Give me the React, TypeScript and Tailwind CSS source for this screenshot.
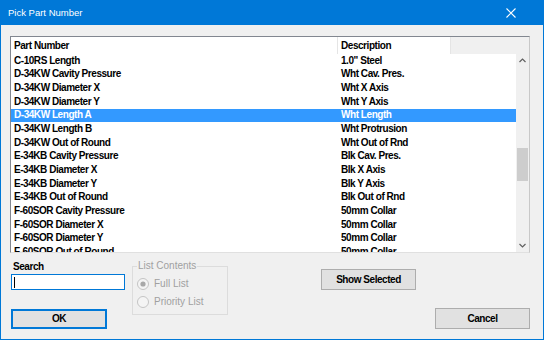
import React from "react";

const rows: [string, string][] = [
  ["C-10RS Length", '1.0" Steel'],
  ["D-34KW Cavity Pressure", "Wht Cav. Pres."],
  ["D-34KW Diameter X", "Wht X Axis"],
  ["D-34KW Diameter Y", "Wht Y Axis"],
  ["D-34KW Length A", "Wht Length"],
  ["D-34KW Length B", "Wht Protrusion"],
  ["D-34KW Out of Round", "Wht Out of Rnd"],
  ["E-34KB Cavity Pressure", "Blk Cav. Pres."],
  ["E-34KB Diameter X", "Blk X Axis"],
  ["E-34KB Diameter Y", "Blk Y Axis"],
  ["E-34KB Out of Round", "Blk Out of Rnd"],
  ["F-60SOR Cavity Pressure", "50mm Collar"],
  ["F-60SOR Diameter X", "50mm Collar"],
  ["F-60SOR Diameter Y", "50mm Collar"],
  ["F-60SOR Out of Round", "50mm Collar"],
];

function Radio({ checked }: { checked?: boolean }) {
  return (
    <svg width="12" height="12" viewBox="0 0 12 12" className="shrink-0">
      <circle cx="6" cy="6" r="5.5" fill="#f4f4f4" stroke="#c4c4c4" strokeWidth="1" />
      {checked && <circle cx="6" cy="6" r="2.6" fill="#a8a8a8" />}
    </svg>
  );
}

export default function App() {
  return (
    <div className="w-[544px] h-[340px] bg-[#f0f0f0] border-x border-b border-[#0078d7] flex flex-col font-['Liberation_Sans',Arial,sans-serif] overflow-hidden">
      {/* Title bar */}
      <div className="h-[25px] shrink-0 bg-[#0078d7] flex items-center justify-between pl-[7px] pr-[27px]">
        <span className="text-white text-[9.5px] leading-[12px]">Pick Part Number</span>
        <svg width="10" height="10" viewBox="0 0 10 10">
          <path d="M0.5 0.5 L9.5 9.5 M9.5 0.5 L0.5 9.5" stroke="#ffffff" strokeWidth="1.1" />
        </svg>
      </div>

      {/* List view */}
      <div className="mt-[11px] ml-[9px] w-[520px] h-[217px] shrink-0 border border-t-[#828790] border-l-[#828790] border-r-[#c8c8c8] border-b-[#e0e0e0] bg-white flex flex-col overflow-hidden text-[10px] font-bold tracking-[-0.45px] text-black">
        {/* Header */}
        <div className="h-[17px] shrink-0 flex">
          <div className="w-[326px] pl-[3px] flex items-center bg-white whitespace-nowrap">Part Number</div>
          <div className="w-px bg-[#e5e5e5]" />
          <div className="w-[112px] pl-[3px] flex items-center bg-white whitespace-nowrap">Description</div>
          <div className="flex-1 bg-[#f0f0f0] border-l border-[#e5e5e5]" />
        </div>
        {/* Body */}
        <div className="flex flex-1 min-h-0">
          <div className="w-[505px] overflow-hidden">
            {rows.map(([a, b], i) => {
              const sel = i === 4;
              return (
                <div
                  key={i}
                  className={
                    "h-[13.667px] flex items-center whitespace-nowrap leading-[12px] " +
                    (sel ? "bg-[#3399ff] text-white" : "text-black")
                  }
                >
                  <div className="w-[326px] pl-[3px]">{a}</div>
                  <div className="pl-[4px]">{b}</div>
                </div>
              );
            })}
          </div>
          {/* Scrollbar */}
          <div className="flex-1 bg-[#f0f0f0] flex flex-col items-center">
            <div className="h-[13px] w-full flex items-center justify-center">
              <svg width="7" height="5" viewBox="0 0 7 5">
                <path d="M0.5 4 L3.5 1 L6.5 4" fill="none" stroke="#606060" strokeWidth="1.2" />
              </svg>
            </div>
            <div className="h-[81px]" />
            <div className="w-[11px] h-[33px] bg-[#cdcdcd]" />
            <div className="flex-1" />
            <div className="h-[13px] w-full flex items-center justify-center">
              <svg width="7" height="5" viewBox="0 0 7 5">
                <path d="M0.5 1 L3.5 4 L6.5 1" fill="none" stroke="#606060" strokeWidth="1.2" />
              </svg>
            </div>
          </div>
        </div>
      </div>

      {/* Bottom controls */}
      <div className="flex items-start pl-[10px] text-[10px]">
        {/* Search column */}
        <div className="w-[114px] flex flex-col mt-[8px]">
          <div className="font-bold tracking-[-0.45px] leading-[12px] h-[12px] text-black ml-[2px]">Search</div>
          <div className="mt-[1px] h-[16px] border border-[#0078d7] bg-white flex items-center pl-[2px]">
            <div className="w-px h-[11px] bg-black" />
          </div>
          <button className="mt-[19px] w-[96px] h-[20px] bg-[#e1e1e1] border border-[#0078d7] shadow-[inset_0_0_0_1px_#0078d7] font-bold tracking-[-0.45px] text-black leading-[12px]">
            OK
          </button>
        </div>

        {/* List Contents group */}
        <fieldset className="ml-[7px] mt-[7px] w-[96px] border border-[#dcdcdc] pb-[6px] text-[#a0a0a0]">
          <legend className="ml-[4px] px-[1px] leading-[12px] text-[10px]">List Contents</legend>
          <div className="pt-[6px] pl-[4px] flex flex-col gap-[6px]">
            <div className="h-[12px] flex items-center gap-[5px] leading-[12px]">
              <Radio checked />
              <span>Full List</span>
            </div>
            <div className="h-[12px] flex items-center gap-[5px] leading-[12px]">
              <Radio />
              <span>Priority List</span>
            </div>
          </div>
        </fieldset>

        {/* Show Selected */}
        <button className="ml-[93px] mt-[16px] w-[95px] h-[21px] bg-[#e1e1e1] border border-[#adadad] font-bold tracking-[-0.45px] text-black leading-[12px]">
          Show Selected
        </button>

        {/* Cancel */}
        <button className="ml-[19px] mt-[55px] w-[95px] h-[21px] bg-[#e1e1e1] border border-[#adadad] font-bold tracking-[-0.45px] text-black leading-[12px]">
          Cancel
        </button>
      </div>
    </div>
  );
}
